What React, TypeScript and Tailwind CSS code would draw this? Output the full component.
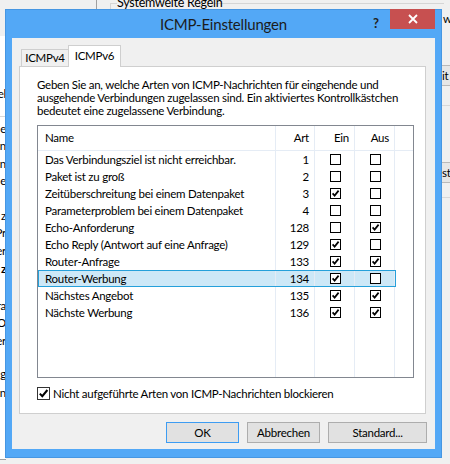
import React from "react";

type Row = { name: string; art: number; ein: boolean; aus: boolean; selected?: boolean };

const rows: Row[] = [
  { name: "Das Verbindungsziel ist nicht erreichbar.", art: 1, ein: false, aus: false },
  { name: "Paket ist zu groß", art: 2, ein: false, aus: false },
  { name: "Zeitüberschreitung bei einem Datenpaket", art: 3, ein: true, aus: false },
  { name: "Parameterproblem bei einem Datenpaket", art: 4, ein: false, aus: false },
  { name: "Echo-Anforderung", art: 128, ein: false, aus: true },
  { name: "Echo Reply (Antwort auf eine Anfrage)", art: 129, ein: true, aus: false },
  { name: "Router-Anfrage", art: 133, ein: true, aus: true },
  { name: "Router-Werbung", art: 134, ein: true, aus: false, selected: true },
  { name: "Nächstes Angebot", art: 135, ein: true, aus: true },
  { name: "Nächste Werbung", art: 136, ein: true, aus: true },
];

// fragments of the window behind the dialog, left edge
const leftBits: [number, string, boolean?][] = [
  [87, "el"],
  [122, "e"],
  [139, "n"],
  [157, "n"],
  [174, "e"],
  [209, "z"],
  [226, "Pr"],
  [244, "er"],
  [262, "z", true],
  [299, "ra"],
  [316, "O"],
  [334, "er"],
  [367, "g"],
  [386, "n"],
];

function ListCheck({ checked }: { checked: boolean }) {
  return (
    <div className="w-[11px] h-[11px] border border-black bg-white flex items-center justify-center">
      {checked && (
        <svg width="9" height="9" viewBox="0 0 9 9">
          <path d="M1.6 4.4 L3.6 6.6 L7.6 1.6" fill="none" stroke="#000" strokeWidth="1.7" />
        </svg>
      )}
    </div>
  );
}

function Btn({ label, primary, wide }: { label: string; primary?: boolean; wide?: boolean }) {
  return (
    <div
      className={`${wide ? "w-[99px]" : "w-[73px]"} h-[21px] flex items-center justify-center bg-[#e1e1e1] border ${
        primary ? "border-[#3d9cf2]" : "border-[#adadad]"
      }`}
    >
      {label}
    </div>
  );
}

export default function App() {
  return (
    <div className="relative w-[450px] h-[464px] overflow-hidden bg-[#f0f0f0] font-['Lato',sans-serif] text-[11.5px] tracking-[-0.25px] text-black">
      {/* background window */}
      <div className="absolute left-[96px] top-0 w-px h-[10px] bg-[#a0a0a0]" />
      <div className="absolute left-[110px] top-[3px] w-[7px] h-px bg-[#d5d5d5]" />
      <div className="absolute left-[214px] top-[3px] w-[230px] h-px bg-[#d5d5d5]" />
      <div className="absolute left-[110px] top-[3px] w-px h-[10px] bg-[#d5d5d5]" />
      <div className="absolute left-[117px] top-0 h-[9px] overflow-hidden">
        <div className="-mt-[5px] leading-[15px] text-[12.5px] whitespace-nowrap">Systemweite Regeln</div>
      </div>

      <div className="absolute left-0 top-[36px] w-[6px] h-[424px] bg-white border-b border-[#a0a0a0]">
        <div className="absolute left-0 top-[80px] w-[6px] h-px bg-[#d8d8d8]" />
        {leftBits.map(([y, t, b]) => (
          <div
            key={y}
            className={`absolute right-0 whitespace-nowrap leading-[14px] ${b ? "font-bold" : ""}`}
            style={{ top: y - 36 }}
          >
            {t}
          </div>
        ))}
      </div>

      <div className="absolute left-[442px] top-0 w-[8px] h-[464px]">
        <div className="absolute left-[1px] top-[12px] leading-[14px]">w</div>
        <div className="absolute left-0 top-[65px] w-[8px] h-[21px] border-y border-[#b9b9b9] bg-[#e6e6e6] leading-[19px]">
          it
        </div>
        <div className="absolute left-0 top-[105px] w-[8px] h-px bg-[#d8d8d8]" />
        <div className="absolute left-0 top-[162px] w-[8px] h-[21px] border-y border-[#b9b9b9] bg-[#e6e6e6] leading-[19px]">
          st
        </div>
        <div className="absolute left-0 top-[197px] w-[8px] h-px bg-[#d8d8d8]" />
      </div>

      {/* dialog window */}
      <div className="absolute left-[5px] top-[9px] w-[437px] h-[449px] flex flex-col bg-[#53a8f6] border border-[#4696e2]">
        <div className="relative h-[28px] flex items-center justify-center">
          <span className="text-[15px] tracking-[-0.2px] text-[#1c1c1c] leading-none">ICMP-Einstellungen</span>
          <span className="absolute left-[367px] top-[4px] text-[13px] font-bold text-[#222]">?</span>
          <div className="absolute right-[6px] top-[-1px] w-[45px] h-[20px] bg-[#c75050] flex items-center justify-center">
            <svg width="10" height="10" viewBox="0 0 10 10">
              <path d="M1 1 L9 9 M9 1 L1 9" stroke="#fff" strokeWidth="1.8" />
            </svg>
          </div>
        </div>

        <div className="mx-[6px] h-[411px] bg-[#f0f0f0] flex flex-col">
          <div className="ml-[7px] mt-[7px] w-[407px]">
            <div className="flex items-end h-[21px] pl-[2px]">
              <div className="w-[47px] h-[17px] border-l border-t border-[#cfcfcf] bg-[#f0f0f0] flex items-center justify-center">
                ICMPv4
              </div>
              <div className="relative z-10 -mb-px w-[53px] h-[22px] border-x border-t border-[#cfcfcf] bg-white flex items-center justify-center pb-[2px]">
                ICMPv6
              </div>
            </div>

            <div className="h-[348px] border border-[#cfcfcf] bg-white pl-[17px] pt-[11px]">
              <div className="leading-[13px] whitespace-nowrap">
                <div>Geben Sie an, welche Arten von ICMP-Nachrichten für eingehende und</div>
                <div>ausgehende Verbindungen zugelassen sind. Ein aktiviertes Kontrollkästchen</div>
                <div>bedeutet eine zugelassene Verbindung.</div>
              </div>

              <div className="mt-[8px] w-[377px] h-[253px] border border-[#828790] flex flex-col">
                <div className="flex h-[25px] border-b border-[#e5ecf5]">
                  <div className="w-[238px] border-r border-[#e5ecf5] pl-[7px] flex items-center">Name</div>
                  <div className="w-[39px] border-r border-[#e5ecf5] pr-[5px] flex items-center justify-end">Art</div>
                  <div className="w-[40px] border-r border-[#e5ecf5] pr-[5px] flex items-center justify-end">Ein</div>
                  <div className="w-[40px] border-r border-[#e5ecf5] pr-[5px] flex items-center justify-end">Aus</div>
                  <div className="flex-1" />
                </div>

                {rows.map((r) => (
                  <div key={r.art} className="relative flex h-[17px]">
                    <div className={`flex ${r.selected ? "bg-[#cde8f7]" : ""}`}>
                      <div className="w-[238px] border-r border-[#e5ecf5] pl-[7px] flex items-center whitespace-nowrap">
                        {r.name}
                      </div>
                      <div className="w-[39px] border-r border-[#e5ecf5] pr-[5px] flex items-center justify-end">
                        {r.art}
                      </div>
                      <div className="w-[40px] border-r border-[#e5ecf5] pl-[1px] flex items-center justify-center">
                        <ListCheck checked={r.ein} />
                      </div>
                      <div className="w-[40px] border-r border-[#e5ecf5] pl-[1px] flex items-center justify-center">
                        <ListCheck checked={r.aus} />
                      </div>
                    </div>
                    <div className="flex-1" />
                    {r.selected && (
                      <div className="absolute left-0 top-0 w-[358px] h-[17px] border border-[#26a0da]" />
                    )}
                  </div>
                ))}

                <div className="flex flex-1">
                  <div className="w-[238px] border-r border-[#e5ecf5]" />
                  <div className="w-[39px] border-r border-[#e5ecf5]" />
                  <div className="w-[40px] border-r border-[#e5ecf5]" />
                  <div className="w-[40px] border-r border-[#e5ecf5]" />
                  <div className="flex-1" />
                </div>
              </div>

              <div className="mt-[7px] flex items-center gap-[3px]">
                <div className="w-[13px] h-[13px] border border-[#333] bg-white flex items-center justify-center">
                  <svg width="11" height="11" viewBox="0 0 11 11">
                    <path d="M1.8 5.6 L4.3 8.2 L9.4 2" fill="none" stroke="#000" strokeWidth="2" />
                  </svg>
                </div>
                <span>Nicht aufgeführte Arten von ICMP-Nachrichten blockieren</span>
              </div>
            </div>
          </div>

          <div className="mt-[8px] flex justify-end gap-[8px] pr-[8px]">
            <Btn label="OK" primary />
            <Btn label="Abbrechen" />
            <Btn label="Standard..." wide />
          </div>
        </div>
      </div>
    </div>
  );
}
